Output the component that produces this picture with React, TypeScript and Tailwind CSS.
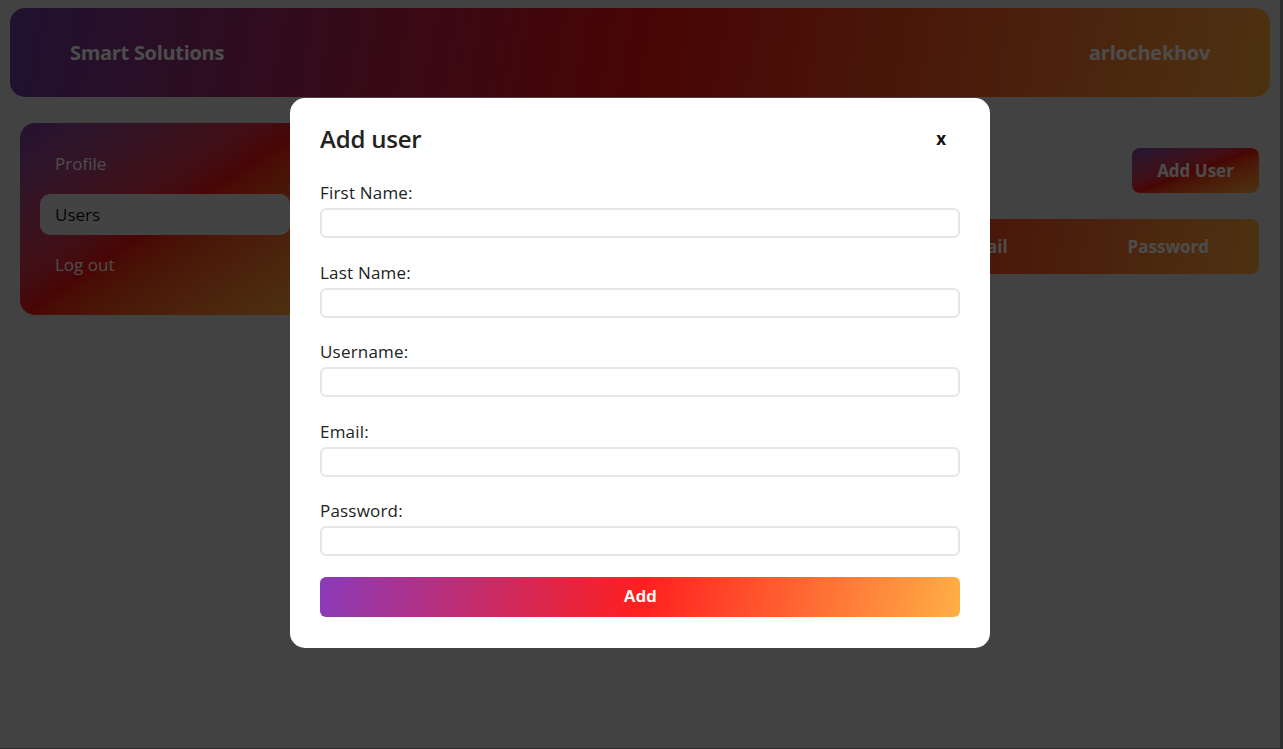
import React from "react";

const font = { fontFamily: '"Open Sans", "Liberation Sans", sans-serif' };

function Field({ label }: { label: string }) {
  return (
    <div className="flex flex-col">
      <label className="mb-[3px] text-[17px] font-medium leading-[24px] tracking-[0.2px] text-[#222]">{label}</label>
      <input className="h-[30px] w-full rounded-[6px] border-2 border-[#e6e6ea] bg-white outline-none" />
    </div>
  );
}

export default function App() {
  return (
    <div className="h-[749px] w-full overflow-hidden bg-[#2b2b2b]" style={font}>
      <div className="relative h-[748px] w-[1280px] bg-[#dcdcdc]">
        {/* underlying page */}
        <div className="px-[10px] pt-[8px]">
          <header className="flex h-[89px] items-center justify-between rounded-[15px] bg-[linear-gradient(100deg,#6a3aa0,#f01010_50%,#ffa83a)] px-[60px] text-white">
            <span className="text-[20px] font-bold tracking-[-0.3px]">Smart Solutions</span>
            <span className="text-[20px] font-bold tracking-[-0.3px]">arlochekhov</span>
          </header>
          <div className="mt-[26px] flex gap-[20px] pl-[10px]">
            <aside className="flex h-[192px] w-[290px] flex-col gap-[10px] rounded-[15px] bg-gradient-to-br from-[#7a3fa8] via-[#f01010] to-[#ffa83a] px-[20px] py-[21px]">
              <div className="flex h-[40px] items-center px-[15px] text-[17px] text-white">Profile</div>
              <div className="flex h-[41px] items-center rounded-[10px] bg-[#e2e2e2] px-[15px] text-[17px] text-[#111]">Users</div>
              <div className="flex h-[40px] items-center px-[15px] text-[17px] text-white">Log out</div>
            </aside>
            <main className="flex flex-1 flex-col items-end pr-[11px]">
              <button className="mt-[25px] h-[45px] w-[127px] rounded-[8px] bg-gradient-to-br from-[#7a3fa8] via-[#f01010] to-[#ffa83a] text-[17px] font-bold text-white">
                Add User
              </button>
              <div className="mt-[26px] flex h-[55px] w-full items-center justify-end gap-[120px] rounded-[8px] bg-[linear-gradient(100deg,#7a3fa8,#f01010_50%,#ffa83a)] pr-[50px] text-[17px] font-bold text-white">
                <span>Name</span>
                <span>Username</span>
                <span>Email</span>
                <span>Password</span>
              </div>
            </main>
          </div>
        </div>

        {/* overlay */}
        <div className="absolute inset-0 flex items-center justify-center bg-black/70">
          <div className="mt-[-2px] w-[700px] rounded-[15px] bg-white px-[30px] pb-[31px] pt-[27px]">
            <div className="flex h-[28px] items-center justify-between">
              <h2 className="text-[24px] font-semibold tracking-[-0.2px] text-[#222]">Add user</h2>
              <button className="mr-[14px] text-[17px] font-bold text-[#111]">x</button>
            </div>
            <div className="mt-[28px] flex flex-col gap-[22.5px]">
              <Field label="First Name:" />
              <Field label="Last Name:" />
              <Field label="Username:" />
              <Field label="Email:" />
              <Field label="Password:" />
            </div>
            <button
              className="mt-[21px] h-[40px] w-full rounded-[6px] bg-[linear-gradient(100deg,#8a3ab9,#ff1f1f_50%,#ffaf46)] text-[17px] font-bold text-white"
              style={{ fontFamily: '"Liberation Sans", Arial, sans-serif' }}
            >
              Add
            </button>
          </div>
        </div>
      </div>
    </div>
  );
}
